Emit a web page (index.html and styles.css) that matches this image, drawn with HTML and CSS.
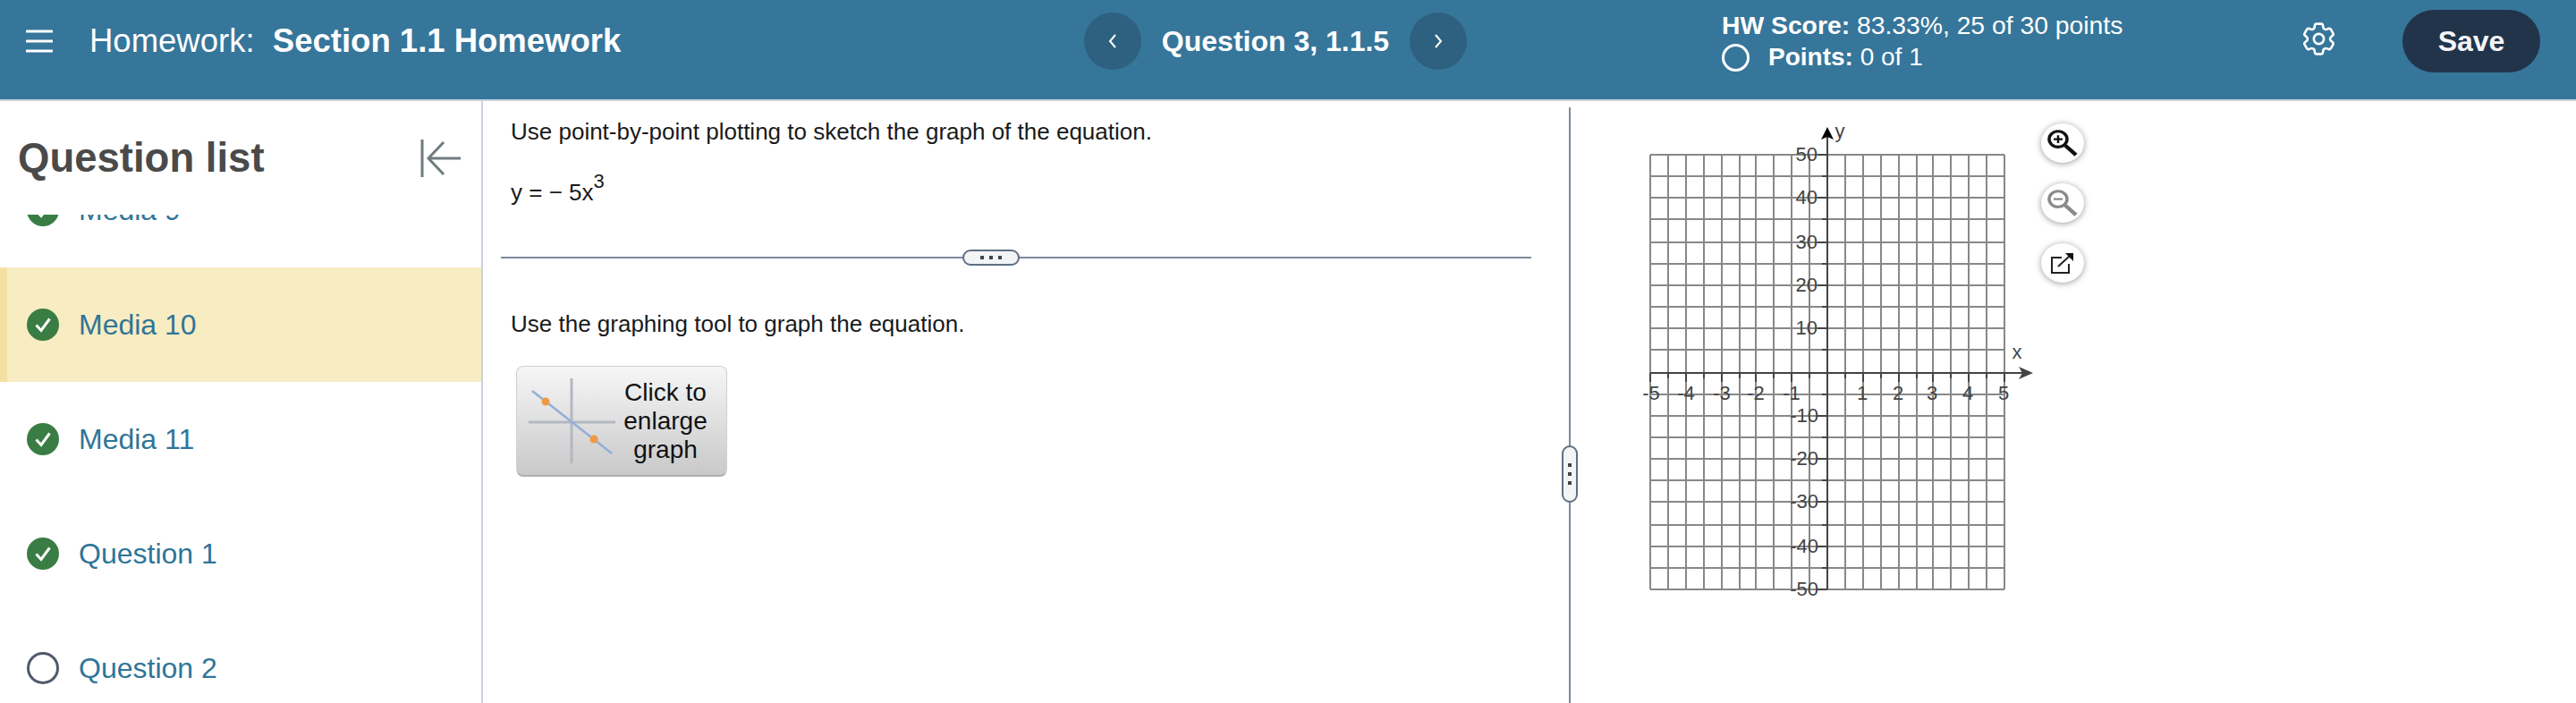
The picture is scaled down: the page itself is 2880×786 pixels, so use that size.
FILE: index.html
```html
<!DOCTYPE html>
<html lang="en">
<head>
<meta charset="UTF-8" />
<title>Section 1.1 Homework</title>
<link rel="stylesheet" href="styles.css">
</head>
<body>

<header class="topbar">
    <div class="title-group">
        <svg class="menu-icon" width="30" height="26" viewBox="0 0 30 26">
            <path d="M1 2H29M1 13H29M1 24H29" stroke="#fff" stroke-width="3" stroke-linecap="round" fill="none"/>
        </svg>
        <div class="title">Homework:&nbsp; <b>Section 1.1 Homework</b></div>
    </div>

    <nav class="question-nav">
        <button class="nav-button">
            <svg width="12" height="18" viewBox="0 0 12 18"><path d="M9 2L3 9L9 16" stroke="#fff" stroke-width="2" fill="none"/></svg>
        </button>
        <span class="nav-label">Question 3, 1.1.5</span>
        <button class="nav-button">
            <svg width="12" height="18" viewBox="0 0 12 18"><path d="M3 2L9 9L3 16" stroke="#fff" stroke-width="2" fill="none"/></svg>
        </button>
    </nav>

    <div class="score">
        <div class="hw-score"><b>HW Score:</b> 83.33%, 25 of 30 points</div>
        <div class="points">
            <span class="points-ring"></span>
            <span><b>Points:</b> 0 of 1</span>
        </div>
    </div>

    <svg class="gear-icon" width="45" height="45" viewBox="0 0 24 24" fill="none" stroke="#fff" stroke-width="1.4">
        <path d="M9.594 3.94c.09-.542.56-.94 1.11-.94h2.593c.55 0 1.02.398 1.11.94l.213 1.281c.063.374.313.686.645.87.074.04.147.083.22.127.325.196.72.257 1.075.124l1.217-.456a1.125 1.125 0 0 1 1.37.49l1.296 2.247a1.125 1.125 0 0 1-.26 1.431l-1.003.827c-.293.241-.438.613-.43.992a7.723 7.723 0 0 1 0 .255c-.008.378.137.75.43.991l1.004.827c.424.35.534.955.26 1.43l-1.298 2.247a1.125 1.125 0 0 1-1.369.491l-1.217-.456c-.355-.133-.75-.072-1.076.124a6.47 6.47 0 0 1-.22.128c-.331.183-.581.495-.644.869l-.213 1.281c-.09.543-.56.94-1.11.94h-2.594c-.55 0-1.019-.398-1.11-.94l-.213-1.281c-.062-.374-.312-.686-.644-.87a6.52 6.52 0 0 1-.22-.127c-.325-.196-.72-.257-1.076-.124l-1.217.456a1.125 1.125 0 0 1-1.369-.49l-1.297-2.247a1.125 1.125 0 0 1 .26-1.431l1.004-.827c.292-.24.437-.613.43-.991a6.932 6.932 0 0 1 0-.255c.007-.38-.138-.751-.43-.992l-1.004-.827a1.125 1.125 0 0 1-.26-1.43l1.297-2.247a1.125 1.125 0 0 1 1.37-.491l1.216.456c.356.133.751.072 1.076-.124.072-.044.146-.086.22-.128.332-.183.582-.495.644-.869l.214-1.28Z"/>
        <circle cx="12" cy="12" r="3"/>
    </svg>

    <button class="save-button">Save</button>
</header>

<div class="layout">
    <aside class="sidebar">
        <div class="sidebar-head">
            <h2>Question list</h2>
            <svg width="46" height="42" viewBox="0 0 46 42" fill="none" stroke="#6f7c80" stroke-width="3">
                <path d="M2 0V42M45 21H10M26 3L9 21L26 39"/>
            </svg>
        </div>
        <ul class="question-list">
            <li class="question-item">
                <svg class="status-icon" viewBox="0 0 36 36"><circle cx="18" cy="18" r="18" fill="#3a7d44"/><path d="M10.5 18.5L16 24.5L25.5 11.5" stroke="#fff" stroke-width="3" fill="none"/></svg>
                <span>Media 9</span>
            </li>
            <li class="question-item active">
                <svg class="status-icon" viewBox="0 0 36 36"><circle cx="18" cy="18" r="18" fill="#3a7d44"/><path d="M10.5 18.5L16 24.5L25.5 11.5" stroke="#fff" stroke-width="3" fill="none"/></svg>
                <span>Media 10</span>
            </li>
            <li class="question-item">
                <svg class="status-icon" viewBox="0 0 36 36"><circle cx="18" cy="18" r="18" fill="#3a7d44"/><path d="M10.5 18.5L16 24.5L25.5 11.5" stroke="#fff" stroke-width="3" fill="none"/></svg>
                <span>Media 11</span>
            </li>
            <li class="question-item">
                <svg class="status-icon" viewBox="0 0 36 36"><circle cx="18" cy="18" r="18" fill="#3a7d44"/><path d="M10.5 18.5L16 24.5L25.5 11.5" stroke="#fff" stroke-width="3" fill="none"/></svg>
                <span>Question 1</span>
            </li>
            <li class="question-item">
                <svg class="status-icon" viewBox="0 0 36 36"><circle cx="18" cy="18" r="16.5" fill="none" stroke="#4f5b6b" stroke-width="3"/></svg>
                <span>Question 2</span>
            </li>
        </ul>
    </aside>

    <main class="question-pane">
        <p class="prompt">Use point-by-point plotting to sketch the graph of the equation.</p>
        <p class="equation">y = &minus; 5x<sup>3</sup></p>

        <div class="divider"><span class="divider-handle"><i></i><i></i><i></i></span></div>

        <p class="prompt">Use the graphing tool to graph the equation.</p>

        <button class="graph-button">
            <svg width="100" height="96" viewBox="0 0 100 96">
                <path d="M48 0V95M0 49H97" stroke="#b4b8c0" stroke-width="3" fill="none"/>
                <path d="M4 14L93 84" stroke="#93aedb" stroke-width="2.5" fill="none"/>
                <circle cx="19" cy="26" r="4.5" fill="#ee9a45"/>
                <circle cx="73" cy="68" r="4.5" fill="#ee9a45"/>
            </svg>
            <span class="graph-button-text">Click to enlarge graph</span>
        </button>
    </main>

    <section class="graph-pane">
        <span class="pane-handle"><i></i><i></i><i></i></span>

        <svg class="graph" width="450" height="540" viewBox="1830 130 450 540">
            <path class="grid-lines" d="M1845 173V659M1865 173V659M1885 173V659M1905 173V659M1925 173V659M1945 173V659M1963 173V659M1983 173V659M2003 173V659M2023 173V659M2063 173V659M2083 173V659M2103 173V659M2123 173V659M2143 173V659M2161 173V659M2181 173V659M2201 173V659M2221 173V659M2241 173V659M1845 173H2241M1845 197H2241M1845 221H2241M1845 245H2241M1845 271H2241M1845 295H2241M1845 319H2241M1845 343H2241M1845 367H2241M1845 391H2241M1845 441H2241M1845 465H2241M1845 489H2241M1845 513H2241M1845 537H2241M1845 561H2241M1845 587H2241M1845 611H2241M1845 635H2241M1845 659H2241"/>
            <path class="axis-lines" d="M2043 150V659M1845 417H2262"/>
            <path class="axis-lines" d="M1845 417V427M1865 417V423M1885 417V427M1905 417V423M1925 417V427M1945 417V423M1963 417V427M1983 417V423M2003 417V427M2023 417V423M2043 417V427M2063 417V423M2083 417V427M2103 417V423M2123 417V427M2143 417V423M2161 417V427M2181 417V423M2201 417V427M2221 417V423M2241 417V427"/>
            <path class="axis-lines" d="M2032 173H2043M2037 197H2043M2032 221H2043M2037 245H2043M2032 271H2043M2037 295H2043M2032 319H2043M2037 343H2043M2032 367H2043M2037 391H2043M2037 441H2043M2032 465H2043M2037 489H2043M2032 513H2043M2037 537H2043M2032 561H2043M2037 587H2043M2032 611H2043M2037 635H2043M2032 659H2043"/>
            <path d="M2043 142L2050 156L2043 153L2036 156Z" fill="#000"/>
            <path d="M2273 417L2257 410L2261 417L2257 424Z" fill="#444"/>
            <g class="labels-y">
                <text x="2032" y="180">50</text>
                <text x="2032" y="228">40</text>
                <text x="2032" y="278">30</text>
                <text x="2032" y="326">20</text>
                <text x="2032" y="374">10</text>
                <text x="2033" y="472">-10</text>
                <text x="2033" y="520">-20</text>
                <text x="2033" y="568">-30</text>
                <text x="2033" y="618">-40</text>
                <text x="2033" y="666">-50</text>
            </g>
            <g class="labels-x">
                <text x="1846" y="447">-5</text>
                <text x="1885" y="447">-4</text>
                <text x="1925" y="447">-3</text>
                <text x="1963" y="447">-2</text>
                <text x="2003" y="447">-1</text>
                <text x="2082" y="447">1</text>
                <text x="2122" y="447">2</text>
                <text x="2160" y="447">3</text>
                <text x="2200" y="447">4</text>
                <text x="2240" y="447">5</text>
                <text x="2255" y="401">x</text>
                <text x="2057" y="154">y</text>
            </g>
        </svg>

        <div class="graph-tools">
            <button class="tool-button">
                <svg width="34" height="30" viewBox="0 0 34 34" preserveAspectRatio="none" fill="none" stroke="#111">
                    <circle cx="12" cy="12" r="10" stroke-width="3.5"/>
                    <path d="M20 20L32 32" stroke-width="4.5"/>
                    <path d="M7 12H17M12 7V17" stroke-width="2.5"/>
                </svg>
            </button>
            <button class="tool-button">
                <svg width="34" height="30" viewBox="0 0 34 34" preserveAspectRatio="none" fill="none" stroke="#8a8a8a">
                    <circle cx="12" cy="12" r="10" stroke-width="3.5"/>
                    <path d="M20 20L32 32" stroke-width="4.5"/>
                    <path d="M7 12H17" stroke-width="2.5"/>
                </svg>
            </button>
            <button class="tool-button">
                <svg width="26" height="24" viewBox="0 0 26 24" fill="none" stroke="#222" stroke-width="2">
                    <path d="M12 6H1V23H20V13"/>
                    <path d="M8 16L21 4"/>
                    <path d="M16 1H25V10Z" fill="#111" stroke="none"/>
                </svg>
            </button>
        </div>
    </section>
</div>

</body>
</html>
```

FILE: styles.css
```css
:root {
    --font-family: "Liberation Sans", Arial, sans-serif;
    --header-color: #36769a;
    --link-color: #2f7598;
    --rule-color: #c9d1dd;
    --splitter-color: #7d8a9c;
}

* {
    box-sizing: border-box;
}

body {
    margin: 0;
    height: 786px;
    overflow: hidden;
    font-family: var(--font-family);
    color: #1a1a1a;
    background: #fff;
}

button {
    font-family: inherit;
    cursor: pointer;
}

/* Top bar */
.topbar {
    display: grid;
    grid-template-columns: 1212px 428px 935px 111px 154px;
    align-items: center;
    height: 113px;
    padding-bottom: 19px;
    background: var(--header-color);
    border-bottom: 2px solid var(--rule-color);
    color: #fff;
}

.title-group {
    display: flex;
    align-items: center;
    padding-left: 29px;
}

.title {
    margin-left: 41px;
    font-size: 36.5px;
}

.question-nav {
    display: flex;
    align-items: center;
    justify-content: space-between;
}

.nav-button {
    display: flex;
    align-items: center;
    justify-content: center;
    width: 64px;
    height: 64px;
    padding: 0;
    border: none;
    border-radius: 50%;
    background: #2e6180;
}

.nav-label {
    font-size: 32px;
    font-weight: bold;
}

.score {
    padding-left: 285px;
    font-size: 28px;
    line-height: 36px;
    white-space: nowrap;
}

.hw-score {
    font-size: 28.3px;
}

.points {
    display: flex;
    align-items: center;
    gap: 21px;
}

.points-ring {
    width: 31px;
    height: 31px;
    border: 3px solid #fff;
    border-radius: 50%;
}

.gear-icon {
    margin: -6px 0 0 -5px;
}

.save-button {
    width: 154px;
    height: 70px;
    padding: 0;
    border: none;
    border-radius: 35px;
    background: #22344a;
    color: #f4f4fa;
    font-size: 32px;
    font-weight: bold;
}

/* Main area */
.layout {
    display: flex;
    height: 673px;
}

.sidebar {
    flex: 0 0 540px;
    border-right: 2px solid var(--rule-color);
    overflow: hidden;
}

.sidebar-head {
    display: flex;
    align-items: center;
    justify-content: space-between;
    height: 127px;
    padding: 0 22px 0 20px;
}

.sidebar-head h2 {
    margin: 0;
    font-size: 45.5px;
    font-weight: bold;
    color: #4a4a4a;
}

.question-list {
    height: 546px;
    margin: 0;
    padding: 0;
    list-style: none;
    overflow: hidden;
}

.question-item {
    display: flex;
    align-items: center;
    gap: 22px;
    height: 128px;
    padding-left: 30px;
    font-size: 32px;
    color: var(--link-color);
}

/* list is scrolled, Media 9 sits mostly out of view */
.question-item:first-child {
    margin-top: -69px;
}

.question-item.active {
    background: #f8ecc2;
    box-shadow: inset 8px 0 0 #f4e0a0;
}

.status-icon {
    width: 36px;
    height: 36px;
}

.question-pane {
    flex: 0 0 1214px;
    padding: 16px 42px 0 20px;
}

.prompt {
    margin: 0 0 0 11px;
    font-size: 26px;
    line-height: 36px;
}

.equation {
    margin: 32px 0 0 11px;
    height: 60px;
    font-size: 26px;
    line-height: 36px;
}

.equation sup {
    font-size: 22px;
    line-height: 0;
    vertical-align: 14px;
}

.divider {
    display: flex;
    align-items: center;
    justify-content: center;
    height: 2px;
    margin-top: 30px;
    margin-bottom: 55px;
    background: var(--splitter-color);
}

.divider-handle {
    display: flex;
    align-items: center;
    justify-content: center;
    gap: 6px;
    width: 64px;
    height: 18px;
    margin-right: 56px;
    background: #f3f4f6;
    border: 2px solid #5f6f82;
    border-radius: 9px;
}

.divider-handle i,
.pane-handle i {
    width: 4px;
    height: 4px;
    background: #444;
}

.graph-button {
    display: flex;
    align-items: center;
    width: 236px;
    height: 124px;
    margin: 29px 0 0 17px;
    padding: 0 0 0 13px;
    border: 1px solid #d0d0d0;
    border-bottom: 2px solid #b0b0b0;
    border-radius: 8px;
    background: linear-gradient(#f6f6f6, #c9c9c9);
    color: #111;
}

.graph-button-text {
    width: 110px;
    margin-left: -2px;
    font-size: 28px;
    line-height: 32px;
    text-align: center;
}

.graph-pane {
    position: relative;
    display: flex;
    flex: 1;
    border-left: 2px solid var(--splitter-color);
    margin-top: 7px;
}

.pane-handle {
    position: absolute;
    left: -10px;
    top: 378px;
    display: flex;
    flex-direction: column;
    align-items: center;
    justify-content: center;
    gap: 6px;
    width: 18px;
    height: 64px;
    background: #f3f4f6;
    border: 2px solid #5f6f82;
    border-radius: 9px;
}

.graph {
    margin: 10px 0 0 74px;
    flex-shrink: 0;
}

.grid-lines {
    stroke: #888;
    stroke-width: 2;
    fill: none;
}

.axis-lines {
    stroke: #444;
    stroke-width: 2;
    fill: none;
}

.labels-y text,
.labels-x text {
    font-size: 22px;
    fill: #444;
}

.labels-y text {
    text-anchor: end;
}

.labels-x text {
    text-anchor: middle;
}

.graph-tools {
    display: flex;
    flex-direction: column;
    gap: 23px;
    margin: 18px 0 0 2px;
}

.tool-button {
    display: flex;
    align-items: center;
    justify-content: center;
    width: 48px;
    height: 44px;
    padding: 0;
    border: none;
    border-radius: 50%;
    background: #fff;
    box-shadow: 0 1px 7px rgba(0, 0, 0, 0.4);
}
```
